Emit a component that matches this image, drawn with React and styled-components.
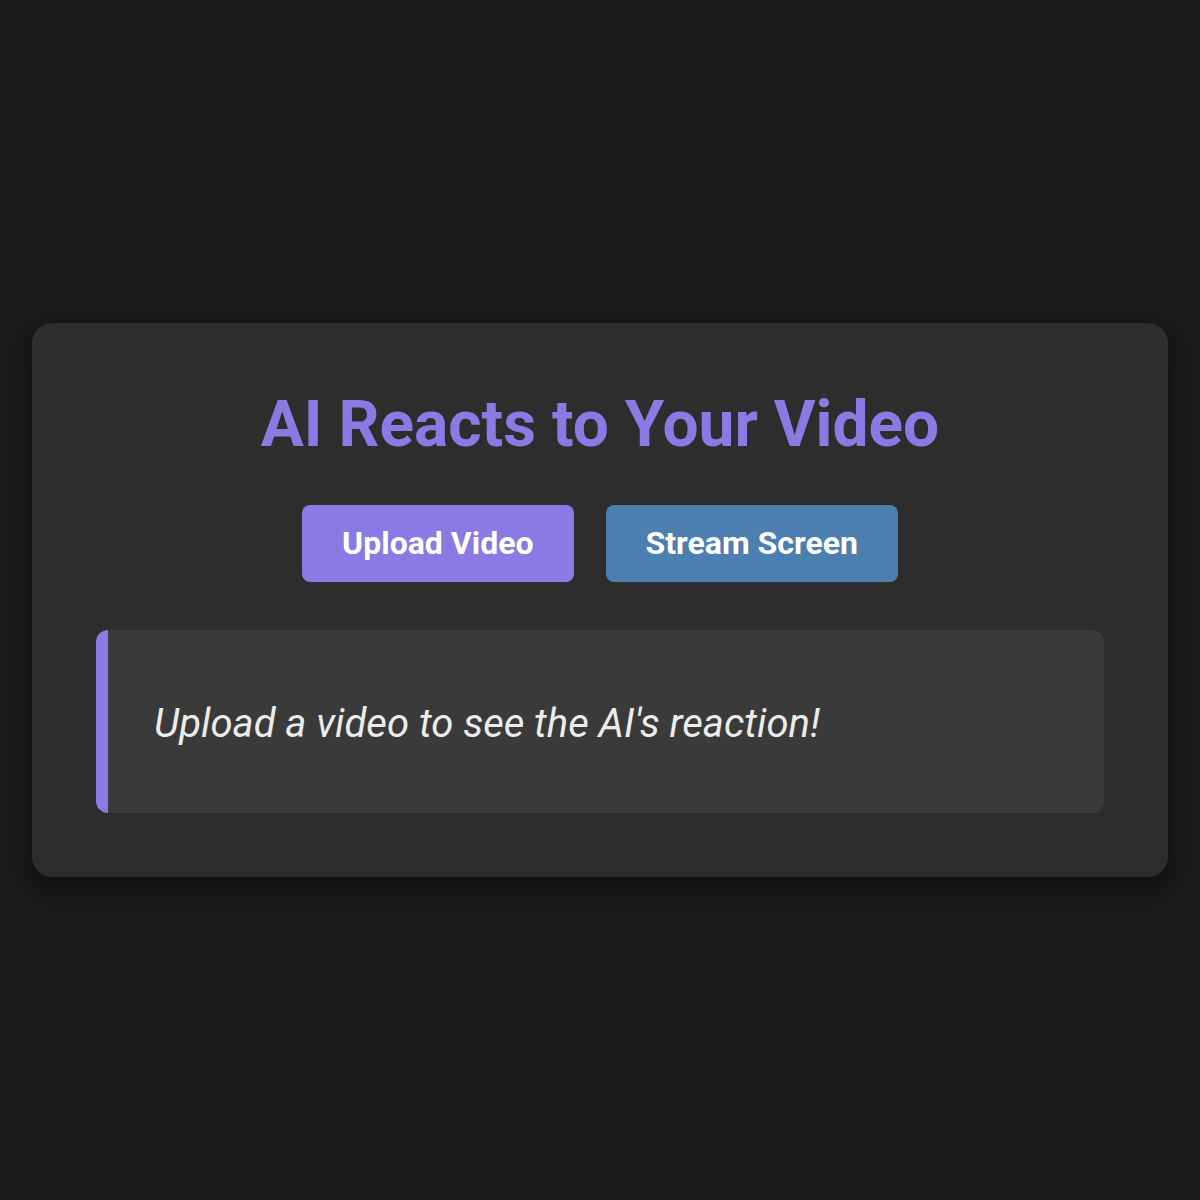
import React from "react";
import styled, { createGlobalStyle } from "styled-components";

const Global = createGlobalStyle`
  html, body { margin: 0; padding: 0; }
  body {
    background: #1a1a1a;
    font-family: Roboto, "Liberation Sans", Arial, sans-serif;
    color: #f0f0f0;
  }
  * { box-sizing: border-box; }
`;

const Page = styled.div`
  min-height: 100vh;
  display: flex;
  align-items: center;
  justify-content: center;
  padding: 0 32px;
`;

const Card = styled.div`
  width: 100%;
  background: #2d2d2d;
  border-radius: 20px;
  padding: 64px;
  box-shadow: 0 10px 30px rgba(0, 0, 0, 0.5);
  display: flex;
  flex-direction: column;
  align-items: center;
`;

const Title = styled.h1`
  margin: 0 0 43px;
  font-size: 64px;
  font-weight: 700;
  line-height: 75px;
  color: #8b7ae3;
  text-align: center;
`;

const Buttons = styled.div`
  display: flex;
  gap: 32px;
  margin-bottom: 48px;
`;

const Button = styled.button`
  border: none;
  border-radius: 8px;
  background: ${(p) => p.$bg};
  color: #ffffff;
  font-family: Roboto, "Liberation Sans", Arial, sans-serif;
  font-size: 32px;
  font-weight: 700;
  line-height: 38px;
  padding: 19px 40px 20px;
  cursor: pointer;
`;

const Reaction = styled.div`
  width: 100%;
  background: #3a3a3a;
  border-left: 12px solid #8b7ae3;
  border-radius: 12px;
  padding: 66px 46px 62px;
`;

const ReactionText = styled.p`
  margin: 0;
  font-size: 40px;
  line-height: 55px;
  font-style: italic;
  color: #ececec;
`;

export default function App() {
  return (
    <>
      <Global />
      <Page>
        <Card>
          <Title>AI Reacts to Your Video</Title>
          <Buttons>
            <Button $bg="#8b7ae3">Upload Video</Button>
            <Button $bg="#4a7fb0">Stream Screen</Button>
          </Buttons>
          <Reaction>
            <ReactionText>Upload a video to see the AI's reaction!</ReactionText>
          </Reaction>
        </Card>
      </Page>
    </>
  );
}
